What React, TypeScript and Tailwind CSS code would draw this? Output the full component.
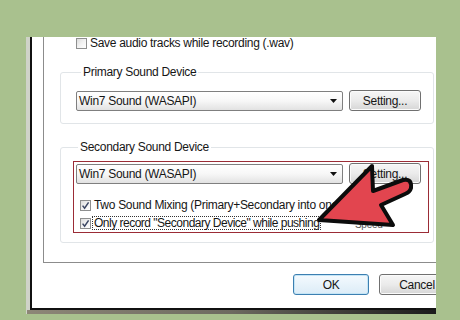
import React from "react";

function CheckBox({ checked }: { checked?: boolean }) {
  return (
    <span className="flex h-[11px] w-[11px] shrink-0 items-center justify-center border border-[#8e8f8f] bg-gradient-to-br from-[#dcdcdc] via-[#f2f2f2] to-white">
      {checked && (
        <svg viewBox="0 0 9 9" className="h-[9px] w-[9px]">
          <path d="M1.6 4.6 L3.6 7.2 L7.6 1.4" fill="none" stroke="#3b4663" strokeWidth="1.5" />
        </svg>
      )}
    </span>
  );
}

function Combo() {
  return (
    <div className="flex h-[20px] w-[267px] items-center justify-between rounded-[2px] border border-[#7f7f7f] bg-gradient-to-b from-white via-[#f7f7f7] to-[#e2e2e2] pl-[2px] pr-[5px]">
      <span>Win7 Sound (WASAPI)</span>
      <svg viewBox="0 0 7 4" className="h-[4px] w-[7px]">
        <path d="M0 0 H7 L3.5 4 Z" fill="#111" />
      </svg>
    </div>
  );
}

function Btn({ label, w, primary }: { label: string; w: string; primary?: boolean }) {
  return (
    <div
      className={
        primary
          ? `flex h-[21px] ${w} shrink-0 items-center justify-center rounded-[3px] border border-[#3c7fb1] bg-gradient-to-b from-[#f4fafe] to-[#dcecf7] shadow-[inset_0_0_0_1px_#c4e5f6]`
          : `flex h-[21px] ${w} shrink-0 items-center justify-center rounded-[3px] border border-[#707070] bg-gradient-to-b from-[#f6f6f6] via-[#ebebeb] to-[#d6d6d6] shadow-[inset_0_0_0_1px_#fbfbfb]`
      }
    >
      {label}
    </div>
  );
}

export default function App() {
  return (
    <div className="relative h-[320px] w-[460px] overflow-hidden bg-[#a9c18e] font-['Liberation_Sans',Arial,sans-serif] text-[12px] leading-[14px] tracking-[-0.3px] text-[#161616]">
      <div className="ml-[26px] mt-[37px] flex h-[277px] w-[410px] flex-col overflow-hidden bg-[#cfd3c8]">
        <div className="ml-[4px] flex h-[273px] flex-col border-b-2 border-l-2 border-[#111] bg-white">
          <div className="ml-[11px] h-[226px] w-[420px] shrink-0 border-b border-l border-[#8c8c8c]">
            <div className="flex h-[12px] items-center gap-[3px] pl-[32px]">
              <CheckBox />
              <span className="leading-[12px]">Save audio tracks while recording (.wav)</span>
            </div>

            <fieldset className="ml-[16px] mt-[16px] w-[374px] rounded-[3px] border border-[#e1e5e8] pb-[12px] pl-[15px] pt-[11px]">
              <legend className="ml-[5px] px-[2px] leading-[14px]">Primary Sound Device</legend>
              <div className="flex items-center gap-[6px]">
                <Combo />
                <Btn label="Setting..." w="w-[72px]" />
              </div>
            </fieldset>

            <fieldset className="ml-[16px] mt-[16px] w-[374px] rounded-[3px] border border-[#e1e5e8] pb-[9px] pl-[12px] pt-[7px]">
              <legend className="ml-[5px] px-[2px] leading-[14px]">Secondary Sound Device</legend>
              <div className="w-[356px] border border-[#9b2c36] pb-[2px] pl-[2px] pt-[1px]">
                <div className="flex items-center gap-[6px]">
                  <Combo />
                  <Btn label="Setting..." w="w-[72px]" />
                </div>
                <div className="mt-[14px] flex h-[14px] items-center gap-[3px] pl-[4px]">
                  <CheckBox checked />
                  <span>Two Sound Mixing (Primary+Secondary into one entry)</span>
                </div>
                <div className="mt-[4px] flex h-[14px] items-center pl-[4px]">
                  <div className="flex w-[275px] items-center gap-[1px]">
                    <CheckBox checked />
                    <span className="border border-dotted border-[#333] px-[1px] leading-[12px] tracking-[-0.5px]">
                      Only record "Secondary Device" while pushing
                    </span>
                  </div>
                  <span className="mt-[3px] text-[10px] leading-[11px] text-[#555]">Speed</span>
                </div>
              </div>
            </fieldset>
          </div>

          <div className="ml-[261px] mt-[11px] flex gap-[10px]">
            <Btn label="OK" w="w-[76px]" primary />
            <Btn label="Cancel" w="w-[76px]" />
          </div>
        </div>
        <div className="ml-[1px] h-[4px] bg-gradient-to-r from-[#8d8777] via-[#6d6a60] to-[#1c1c1c]" />
      </div>

      <svg className="pointer-events-none absolute left-0 top-0" width="460" height="320" viewBox="0 0 460 320">
        <path
          d="M319 220 L372 166 L373 191 L403 180 Q412 178 411 188 Q410 192 405 194 L381 205 L393 225 Z"
          fill="#e2454f"
          stroke="#0c0c0c"
          strokeWidth="4"
          strokeLinejoin="round"
        />
      </svg>
    </div>
  );
}
